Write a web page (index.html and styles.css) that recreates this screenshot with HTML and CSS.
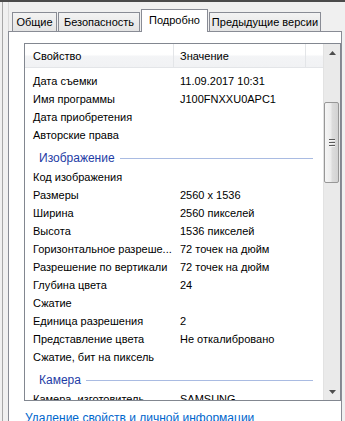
FILE: index.html
```html
<!DOCTYPE html>
<html lang="ru">
<head>
<meta charset="utf-8">
<title>Свойства</title>
<link rel="stylesheet" href="styles.css">
</head>
<body>
<div class="window">
  <div class="frame">
    <div class="tabs">
      <div class="tab t1">Общие</div>
      <div class="tab t2">Безопасность</div>
      <div class="tab active">Подробно</div>
      <div class="tab t4">Предыдущие версии</div>
    </div>
    <div class="panel">
      <div class="list">
        <div class="list-main">
          <div class="header">
            <div class="hc hc1">Свойство</div>
            <div class="hc hc2">Значение</div>
            <div class="hc hc3"></div>
          </div>
          <div class="rows">
            <div class="row"><span class="c1">Дата съемки</span><span class="c2">11.09.2017 10:31</span></div>
            <div class="row"><span class="c1">Имя программы</span><span class="c2">J100FNXXU0APC1</span></div>
            <div class="row"><span class="c1">Дата приобретения</span><span class="c2"></span></div>
            <div class="row"><span class="c1">Авторские права</span><span class="c2"></span></div>
            <div class="group"><span class="gname">Изображение</span><span class="gline"></span></div>
            <div class="row"><span class="c1">Код изображения</span><span class="c2"></span></div>
            <div class="row"><span class="c1">Размеры</span><span class="c2">2560 x 1536</span></div>
            <div class="row"><span class="c1">Ширина</span><span class="c2">2560 пикселей</span></div>
            <div class="row"><span class="c1">Высота</span><span class="c2">1536 пикселей</span></div>
            <div class="row"><span class="c1">Горизонтальное разреше...</span><span class="c2">72 точек на дюйм</span></div>
            <div class="row"><span class="c1">Разрешение по вертикали</span><span class="c2">72 точек на дюйм</span></div>
            <div class="row"><span class="c1">Глубина цвета</span><span class="c2">24</span></div>
            <div class="row"><span class="c1">Сжатие</span><span class="c2"></span></div>
            <div class="row"><span class="c1">Единица разрешения</span><span class="c2">2</span></div>
            <div class="row"><span class="c1">Представление цвета</span><span class="c2">Не откалибровано</span></div>
            <div class="row"><span class="c1">Сжатие, бит на пиксель</span><span class="c2"></span></div>
            <div class="group"><span class="gname">Камера</span><span class="gline"></span></div>
            <div class="row"><span class="c1">Камера, изготовитель</span><span class="c2">SAMSUNG</span></div>
          </div>
        </div>
        <div class="scrollbar">
          <div class="sb-btn">
            <svg width="7" height="4" viewBox="0 0 7 4"><path d="M0 4 L3.5 0 L7 4 Z" fill="#4d4d4d"/></svg>
          </div>
          <div class="sb-track">
            <div class="sb-thumb">
              <div class="grip"><i></i><i></i><i></i></div>
            </div>
          </div>
          <div class="sb-btn">
            <svg width="7" height="4" viewBox="0 0 7 4"><path d="M0 0 L3.5 4 L7 0 Z" fill="#4d4d4d"/></svg>
          </div>
        </div>
      </div>
      <a class="link" href="#">Удаление свойств и личной информации</a>
    </div>
  </div>
</div>
</body>
</html>
```

FILE: styles.css
```css
html, body {
  margin: 0;
  padding: 0;
}
body {
  width: 345px;
  height: 421px;
  overflow: hidden;
  background: #f0f0f0;
  font-family: "Liberation Sans", Arial, sans-serif;
  font-size: 11px;
  color: #000;
}
.window {
  border-top: 2px solid #4b4b4b;
  height: 419px;
}
.frame {
  margin-left: 2px;
  border-left: 1px solid #a7a7a7;
  height: 419px;
}
.tabs {
  display: flex;
  align-items: flex-end;
  padding-top: 7px;
  padding-left: 9px;
  height: 22px;
  margin-left: 5px;
  border-left: 1px solid #d9d9d9;
}
.tabs .t1 { margin-left: -6px; }
.tab {
  box-sizing: border-box;
  height: 19px;
  border: 1px solid #898c95;
  border-bottom: none;
  background: linear-gradient(#f3f3f3, #e4e4e4);
  line-height: 18px;
  text-align: center;
  white-space: nowrap;
}
.t1 { width: 45px; margin-right: 1px; }
.t2 { width: 82px; }
.t4 { width: 112px; margin-left: 1px; }
.tab.active {
  position: relative;
  z-index: 2;
  height: 23px;
  width: 67px;
  margin-left: 1px;
  margin-bottom: -1px;
  background: #fff;
  line-height: 20px;
}
.panel {
  box-sizing: border-box;
  margin-left: 5px;
  width: 334px;
  height: 400px;
  border: 1px solid #898c95;
  background: #fff;
  padding-top: 11px;
  padding-left: 15px;
}
.list {
  box-sizing: border-box;
  width: 317px;
  height: 358px;
  border: 1px solid #828790;
  display: flex;
  overflow: hidden;
}
.list-main {
  width: 298px;
  overflow: hidden;
}
.header {
  display: flex;
  height: 23px;
  border-bottom: 1px solid #e3e5e8;
  background: linear-gradient(#ffffff 0%, #ffffff 45%, #f3f4f6 55%, #f1f2f4 100%);
}
.hc {
  box-sizing: border-box;
  line-height: 25px;
  white-space: nowrap;
}
.hc1 { width: 149px; padding-left: 8px; border-right: 1px solid #e3e5e8; }
.hc2 { width: 132px; padding-left: 6px; border-right: 1px solid #e3e5e8; }
.hc3 { flex: 1; }
.rows {
  padding-top: 4px;
}
.row {
  display: flex;
  height: 18px;
  line-height: 18px;
  white-space: nowrap;
}
.c1 {
  box-sizing: border-box;
  width: 149px;
  padding-left: 8px;
  overflow: hidden;
}
.c2 {
  padding-left: 6px;
}
.group {
  box-sizing: border-box;
  height: 24px;
  padding-top: 5px;
  padding-left: 14px;
  padding-right: 10px;
  display: flex;
  align-items: center;
}
.gname {
  color: #1e3ca5;
  line-height: 17px;
  font-size: 12px;
  white-space: nowrap;
}
.gline {
  flex: 1;
  height: 1px;
  margin-left: 5px;
  background: #a9bbe2;
}
.scrollbar {
  width: 17px;
  display: flex;
  flex-direction: column;
  background: #eaeaea;
  border-left: 1px solid #e2e2e2;
  box-sizing: border-box;
}
.sb-btn {
  height: 17px;
  display: flex;
  align-items: center;
  justify-content: center;
}
.sb-track {
  flex: 1;
  padding-top: 41px;
}
.sb-thumb {
  box-sizing: border-box;
  width: 15px;
  height: 81px;
  border: 1px solid #979797;
  border-radius: 2px;
  background: linear-gradient(90deg, #f5f5f5 0%, #ececec 45%, #dcdcdc 55%, #d2d2d2 100%);
  display: flex;
  align-items: center;
  justify-content: center;
}
.grip {
  display: flex;
  flex-direction: column;
  gap: 1px;
}
.grip i {
  display: block;
  width: 6px;
  height: 1px;
  background: #5a5a5a;
  border-bottom: 1px solid #f4f4f4;
}
.link {
  display: block;
  margin-top: 10px;
  margin-left: 1px;
  color: #0066cc;
  text-decoration: none;
  font-size: 12px;
  line-height: 14px;
  white-space: nowrap;
}
```
